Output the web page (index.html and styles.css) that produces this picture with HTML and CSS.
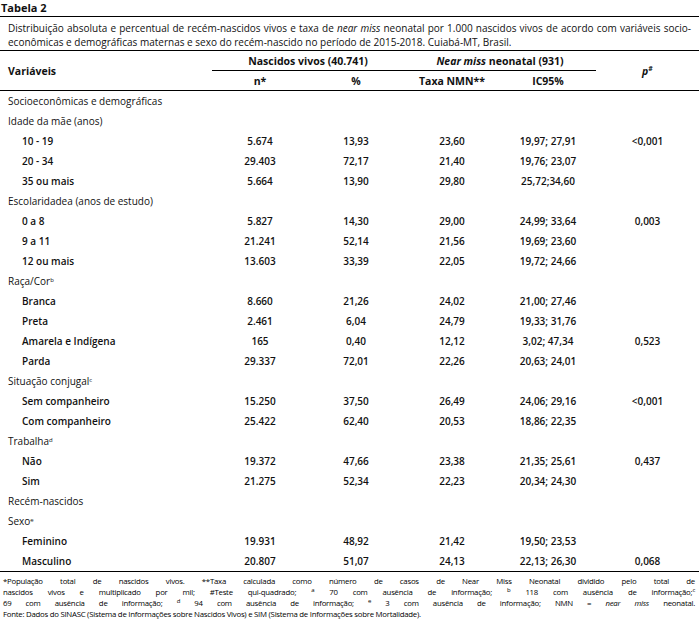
FILE: index.html
```html
<!DOCTYPE html>
<html lang="pt">
<head>
<meta charset="utf-8">
<title>Tabela 2</title>
<link rel="stylesheet" href="styles.css">
</head>
<body>
<div class="sheet">
  <div class="title">Tabela 2</div>
  <p class="caption">Distribuição absoluta e percentual de recém-nascidos vivos e taxa de <i>near miss</i> neonatal por 1.000 nascidos vivos de acordo com variáveis socio-econômicas e demográficas maternas e sexo do recém-nascido no período de 2015-2018. Cuiabá-MT, Brasil.</p>
  <table class="data">
    <colgroup>
      <col class="c-var"><col class="c-n"><col class="c-n"><col class="c-n"><col class="c-n"><col>
    </colgroup>
    <thead>
      <tr class="h1">
        <th rowspan="2" class="var">Variáveis</th>
        <th colspan="2" class="grp">Nascidos vivos (40.741)</th>
        <th colspan="2" class="grp"><i>Near miss</i> neonatal (931)</th>
        <th rowspan="2"><i>p</i><sup class="hash">#</sup></th>
      </tr>
      <tr class="h2">
        <th>n*</th><th>%</th><th>Taxa NMN**</th><th>IC95%</th>
      </tr>
    </thead>
    <tbody>
      <tr class="cat"><td colspan="6">Socioeconômicas e demográficas</td></tr>
      <tr class="cat"><td colspan="6">Idade da mãe (anos)</td></tr>
      <tr class="row"><td>10 - 19</td><td>5.674</td><td>13,93</td><td>23,60</td><td>19,97; 27,91</td><td>&lt;0,001</td></tr>
      <tr class="row"><td>20 - 34</td><td>29.403</td><td>72,17</td><td>21,40</td><td>19,76; 23,07</td><td></td></tr>
      <tr class="row"><td>35 ou mais</td><td>5.664</td><td>13,90</td><td>29,80</td><td>25,72;34,60</td><td></td></tr>
      <tr class="cat"><td colspan="6">Escolaridadea (anos de estudo)</td></tr>
      <tr class="row"><td>0 a 8</td><td>5.827</td><td>14,30</td><td>29,00</td><td>24,99; 33,64</td><td>0,003</td></tr>
      <tr class="row"><td>9 a 11</td><td>21.241</td><td>52,14</td><td>21,56</td><td>19,69; 23,60</td><td></td></tr>
      <tr class="row"><td>12 ou mais</td><td>13.603</td><td>33,39</td><td>22,05</td><td>19,72; 24,66</td><td></td></tr>
      <tr class="cat"><td colspan="6">Raça/Cor<sup class="mk">b</sup></td></tr>
      <tr class="row"><td>Branca</td><td>8.660</td><td>21,26</td><td>24,02</td><td>21,00; 27,46</td><td></td></tr>
      <tr class="row"><td>Preta</td><td>2.461</td><td>6,04</td><td>24,79</td><td>19,33; 31,76</td><td></td></tr>
      <tr class="row"><td>Amarela e Indígena</td><td>165</td><td>0,40</td><td>12,12</td><td>3,02; 47,34</td><td>0,523</td></tr>
      <tr class="row"><td>Parda</td><td>29.337</td><td>72,01</td><td>22,26</td><td>20,63; 24,01</td><td></td></tr>
      <tr class="cat"><td colspan="6">Situação conjugal<sup class="mk">c</sup></td></tr>
      <tr class="row"><td>Sem companheiro</td><td>15.250</td><td>37,50</td><td>26,49</td><td>24,06; 29,16</td><td>&lt;0,001</td></tr>
      <tr class="row"><td>Com companheiro</td><td>25.422</td><td>62,40</td><td>20,53</td><td>18,86; 22,35</td><td></td></tr>
      <tr class="cat"><td colspan="6">Trabalha<sup class="mk">d</sup></td></tr>
      <tr class="row"><td>Não</td><td>19.372</td><td>47,66</td><td>23,38</td><td>21,35; 25,61</td><td>0,437</td></tr>
      <tr class="row"><td>Sim</td><td>21.275</td><td>52,34</td><td>22,23</td><td>20,34; 24,30</td><td></td></tr>
      <tr class="cat"><td colspan="6">Recém-nascidos</td></tr>
      <tr class="cat"><td colspan="6">Sexo<sup class="mk">e</sup></td></tr>
      <tr class="row"><td>Feminino</td><td>19.931</td><td>48,92</td><td>21,42</td><td>19,50; 23,53</td><td></td></tr>
      <tr class="row"><td>Masculino</td><td>20.807</td><td>51,07</td><td>24,13</td><td>22,13; 26,30</td><td>0,068</td></tr>
    </tbody>
  </table>
  <div class="notes">
    <span class="line just">*População total de nascidos vivos. **Taxa calculada como número de casos de Near Miss Neonatal dividido pelo total de</span>
    <span class="line just">nascidos vivos e multiplicado por mil; #Teste qui-quadrado; <sup class="mk">a</sup> 70 com ausência de informação; <sup class="mk">b</sup> 118 com ausência de informação;<sup class="mk">c</sup></span>
    <span class="line just">69 com ausência de informação; <sup class="mk">d</sup> 94 com ausência de informação; <sup class="mk">e</sup> 3 com ausência de informação; NMN = <i>near miss</i> neonatal.</span>
    <span class="line">Fonte: Dados do SINASC (Sistema de Informações sobre Nascidos Vivos) e SIM (Sistema de Informações sobre Mortalidade).</span>
  </div>
</div>
</body>
</html>
```

FILE: styles.css
```css
html, body {
  margin: 0;
  padding: 0;
  background: #fff;
}
body {
  font-family: "Open Sans", "Noto Sans", sans-serif;
  color: #111;
  font-size: 10px;
}
.sheet {
  width: 699px;
}
.title {
  font-weight: 700;
  font-size: 11px;
  line-height: 16px;
  padding-left: 1px;
  border-bottom: 1px solid #000;
}
.caption {
  margin: 0;
  padding: 4px 8px 0 8px;
  height: 29px;
  line-height: 14px;
  text-align: justify;
  border-bottom: 1px solid #000;
}
.data {
  width: 699px;
  border-collapse: collapse;
  table-layout: fixed;
}
.c-var { width: 212px; }
.c-n { width: 96px; }
.data th, .data td {
  padding: 0;
  text-align: center;
  white-space: nowrap;
}
.data th {
  font-weight: 700;
  font-size: 10.5px;
}
.h1 th { height: 19px; }
.h2 th { height: 19px; }
.grp { border-bottom: 1px solid #000; }
.data th.var { text-align: left; padding-left: 8px; }
.h2 th, .data th[rowspan] { border-bottom: 1px solid #000; }
.hash { font-size: 7px; vertical-align: 4px; line-height: 0; }
.data tbody td { height: 20px; }
.cat td { text-align: left; padding-left: 8px; font-weight: 400; }
.row td { font-weight: 600; }
.row td:first-child { text-align: left; padding-left: 22px; }
.data tbody tr:last-child td { border-bottom: 1px solid #000; }
.mk { font-size: 6px; vertical-align: 3px; line-height: 0; }
.notes {
  padding: 4px 4px 0 3px;
  font-size: 7.8px;
  letter-spacing: -0.25px;
  line-height: 11px;
  color: #000;
}
.line { display: block; white-space: nowrap; }
.line.just { white-space: normal; text-align: justify; text-align-last: justify; }
```
